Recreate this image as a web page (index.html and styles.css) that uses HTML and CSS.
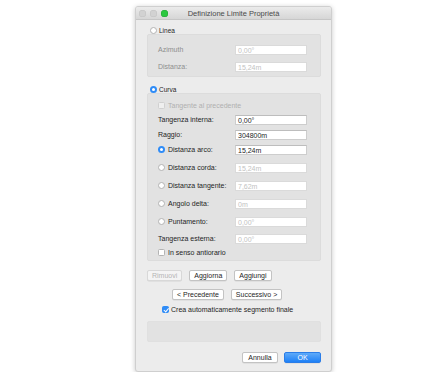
FILE: index.html
```html
<!DOCTYPE html>
<html lang="it">
<head>
    <meta charset="UTF-8">
    <title>Definizione Limite Proprietà</title>
    <link rel="stylesheet" href="styles.css">
</head>
<body>
    <div class="window">
        <div class="titlebar">
            <div class="lights">
                <span class="light"></span>
                <span class="light"></span>
                <span class="light green"></span>
            </div>
            <div class="title">Definizione Limite Proprietà</div>
            <div></div>
        </div>

        <div class="content">
            <!-- Linea -->
            <div class="heading"><span class="radio"></span>Linea</div>
            <div class="group group-linea">
                <div class="row">
                    <span class="label dim">Azimuth</span>
                    <span class="field off">0,00°</span>
                </div>
                <div class="row gap">
                    <span class="label dim">Distanza:</span>
                    <span class="field off">15,24m</span>
                </div>
            </div>

            <!-- Curva -->
            <div class="heading curva"><span class="radio on"></span>Curva</div>
            <div class="group group-curva">
                <div class="row check-row first">
                    <span class="check off"></span><span class="faint">Tangente al precedente</span>
                </div>
                <div class="row">
                    <span class="label">Tangenza interna:</span>
                    <span class="field">0,00°</span>
                </div>
                <div class="row">
                    <span class="label">Raggio:</span>
                    <span class="field">304800m</span>
                </div>
                <div class="row">
                    <span class="label"><span class="radio on"></span>Distanza arco:</span>
                    <span class="field">15,24m</span>
                </div>
                <div class="row spaced">
                    <span class="label"><span class="radio"></span>Distanza corda:</span>
                    <span class="field off">15,24m</span>
                </div>
                <div class="row spaced">
                    <span class="label"><span class="radio"></span>Distanza tangente:</span>
                    <span class="field off">7,62m</span>
                </div>
                <div class="row spaced">
                    <span class="label"><span class="radio"></span>Angolo delta:</span>
                    <span class="field off">0m</span>
                </div>
                <div class="row spaced">
                    <span class="label"><span class="radio"></span>Puntamento:</span>
                    <span class="field off">0,00°</span>
                </div>
                <div class="row gap">
                    <span class="label">Tangenza esterna:</span>
                    <span class="field off">0,00°</span>
                </div>
                <div class="row check-row last">
                    <span class="check"></span>In senso antiorario
                </div>
            </div>

            <div class="buttons">
                <span class="btn disabled">Rimuovi</span>
                <span class="btn">Aggiorna</span>
                <span class="btn">Aggiungi</span>
            </div>

            <div class="buttons nav">
                <span class="btn">&lt; Precedente</span>
                <span class="btn">Successivo &gt;</span>
            </div>

            <div class="final"><span class="check checked"></span>Crea automaticamente segmento finale</div>

            <div class="group status"></div>

            <div class="footer">
                <span class="btn cancel">Annulla</span>
                <span class="btn primary">OK</span>
            </div>
        </div>
    </div>
</body>
</html>
```

FILE: styles.css
```css
body {
    margin: 0;
    background-color: #fff;
    font-family: "Liberation Sans", Arial, sans-serif;
    font-size: 7px;
    color: #1e1e1e;
}

.window {
    width: 197px;
    height: 366px;
    margin: 6px 0 0 135px;
    box-sizing: border-box;
    background-color: #ececec;
    border: 1px solid #cfcfcf;
    border-radius: 3px;
    box-shadow: 0 1px 5px rgba(0, 0, 0, 0.22);
    overflow: hidden;
}

.titlebar {
    display: grid;
    grid-template-columns: 1fr auto 1fr;
    align-items: center;
    height: 12px;
    background: linear-gradient(#ebebeb, #d6d6d6);
    border-bottom: 1px solid #c6c6c6;
}

.lights {
    display: flex;
    gap: 4px;
    padding-left: 3px;
}

.light {
    width: 7px;
    height: 7px;
    border-radius: 50%;
    background-color: #d2d2d2;
    box-shadow: inset 0 0 0 0.5px #c2c2c2;
}

.light.green {
    background-color: #2bc840;
    box-shadow: inset 0 0 0 0.5px #23a435;
}

.title {
    font-size: 7.5px;
    color: #4a4a4a;
}

.content {
    padding: 6px 10px 0 11px;
}

.heading {
    display: flex;
    align-items: center;
    gap: 2px;
    height: 8px;
    padding-left: 3px;
    font-size: 6.5px;
}

.heading.curva {
    margin-top: 8px;
}

.group {
    background-color: #e2e2e2;
    border: 1px solid #dcdcdc;
    border-radius: 2px;
    box-sizing: border-box;
}

.group-linea {
    height: 43px;
    padding: 7px 13px 0 10px;
}

.group-curva {
    padding: 4px 13px 2px 10px;
}

.row {
    display: flex;
    align-items: center;
    height: 15px;
}

.row.gap {
    margin-top: 2px;
}

.row.spaced {
    margin-top: 3px;
}

.check-row {
    height: 14px;
    gap: 3px;
}

.check-row.last {
    height: 12px;
}

.label {
    display: flex;
    align-items: center;
    gap: 3px;
    width: 77px;
    flex-shrink: 0;
}

.dim {
    color: #8e8e8e;
}

.faint {
    color: #b0b0b0;
}

.field {
    width: 72px;
    height: 10px;
    box-sizing: border-box;
    padding-left: 2px;
    line-height: 9px;
    background-color: #fff;
    border: 1px solid #cdcdcd;
    border-top-color: #bdbdbd;
}

.field.off {
    color: #c2c2c2;
    border-color: #dadada;
}

.radio {
    display: inline-block;
    width: 7px;
    height: 7px;
    box-sizing: border-box;
    border-radius: 50%;
    background-color: #fff;
    border: 1px solid #b3b3b3;
    flex-shrink: 0;
}

.radio.on {
    background-color: #fff;
    border: 2.5px solid #2f8cf7;
}

.check {
    display: inline-block;
    width: 7px;
    height: 7px;
    box-sizing: border-box;
    border-radius: 1.5px;
    background-color: #fff;
    border: 1px solid #b3b3b3;
    flex-shrink: 0;
    position: relative;
}

.check.off {
    border-color: #d0d0d0;
    background-color: #efefef;
}

.check.checked {
    background-color: #2f8cf7;
    border-color: #2f8cf7;
}

/* white tick drawn with borders */
.check.checked::after {
    content: "";
    position: absolute;
    left: 1.5px;
    top: 0;
    width: 1.5px;
    height: 3.5px;
    border: solid #fff;
    border-width: 0 1px 1px 0;
    transform: rotate(40deg);
}

.buttons {
    display: flex;
    gap: 7px;
    margin-top: 9px;
}

.buttons.nav {
    margin-top: 8px;
    padding-left: 25px;
}

.btn {
    display: inline-block;
    height: 11px;
    box-sizing: border-box;
    padding: 0 4px;
    line-height: 9px;
    background-color: #fff;
    border: 1px solid #c3c3c3;
    border-radius: 2px;
    box-shadow: 0 0.5px 0.5px rgba(0, 0, 0, 0.1);
    text-align: center;
}

.btn.disabled {
    color: #b4b4b4;
    background-color: #f4f4f4;
    border-color: #d8d8d8;
}

.btn.cancel {
    width: 36px;
}

.btn.primary {
    width: 37px;
    color: #fff;
    background: linear-gradient(#5eaaf9, #1e80f6);
    border-color: #2a7de8;
}

.final {
    display: flex;
    align-items: center;
    gap: 2px;
    height: 8px;
    margin-top: 5px;
    padding-left: 15px;
}

.status {
    height: 21px;
    margin-top: 8px;
    border-color: #e0e0e0;
}

.footer {
    display: flex;
    justify-content: flex-end;
    gap: 6px;
    margin-top: 10px;
}
```
